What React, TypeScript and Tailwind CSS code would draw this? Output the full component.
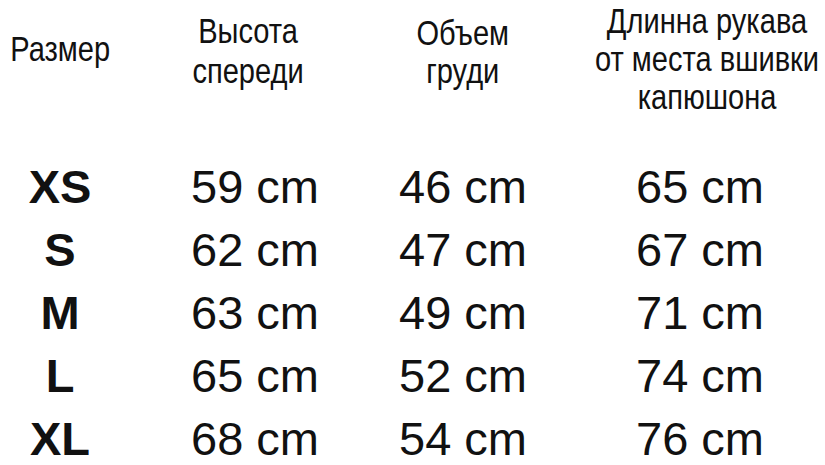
const rows = [
  { size: "XS", height: 59, chest: 46, sleeve: 65 },
  { size: "S", height: 62, chest: 47, sleeve: 67 },
  { size: "M", height: 63, chest: 49, sleeve: 71 },
  { size: "L", height: 65, chest: 52, sleeve: 74 },
  { size: "XL", height: 68, chest: 54, sleeve: 76 },
];

const grid = "grid grid-cols-[120px_264px_158px_1fr]";

// the header lettering is condensed; no narrow face is installed, so squeeze it
function Narrow({ children }: { children: React.ReactNode }) {
  return <span className="inline-block whitespace-nowrap scale-x-[0.83] origin-center">{children}</span>;
}

export default function App() {
  return (
    <div className="w-[825px] h-[465px] bg-white text-[#111] overflow-hidden font-['Liberation_Sans',Arial,sans-serif]">
      {/* header */}
      <div className={`${grid} h-[155px] items-start text-center text-[35px] leading-[38px]`}>
        <div className="pt-[30px]">
          <Narrow>Размер</Narrow>
        </div>
        <div className="pt-[11px] pr-[8px] leading-[40px]">
          <Narrow>
            Высота
            <br />
            спереди
          </Narrow>
        </div>
        <div className="pt-[14px]">
          <Narrow>
            Объем
            <br />
            груди
          </Narrow>
        </div>
        <div className="pt-[2px] pl-[30px]">
          <Narrow>
            Длинна рукава
            <br />
            от места вшивки
            <br />
            капюшона
          </Narrow>
        </div>
      </div>

      {/* rows */}
      {rows.map((r) => (
        <div key={r.size} className={`${grid} h-[63px] text-center text-[47px] leading-[63px]`}>
          <div className="font-bold">{r.size}</div>
          <div className="pl-[6px]">{r.height} cm</div>
          <div>{r.chest} cm</div>
          <div className="pl-[33px]">{r.sleeve} cm</div>
        </div>
      ))}
    </div>
  );
}
